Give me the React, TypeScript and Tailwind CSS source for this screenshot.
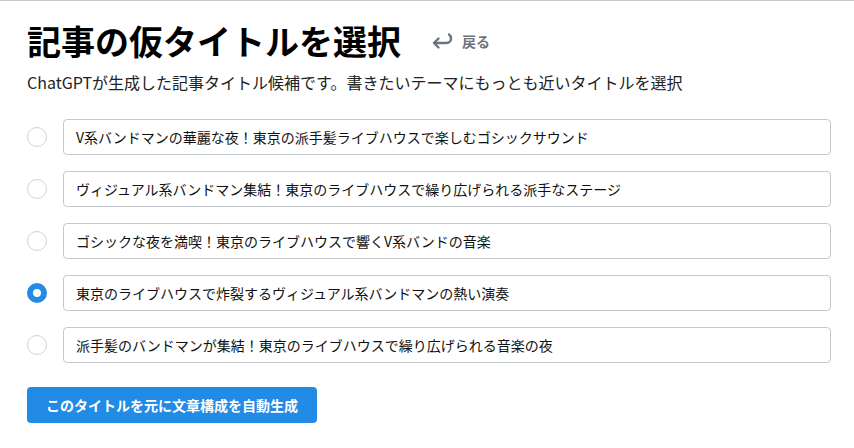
import { useState } from 'react';

const titles = [
  'V系バンドマンの華麗な夜！東京の派手髪ライブハウスで楽しむゴシックサウンド',
  'ヴィジュアル系バンドマン集結！東京のライブハウスで繰り広げられる派手なステージ',
  'ゴシックな夜を満喫！東京のライブハウスで響くV系バンドの音楽',
  '東京のライブハウスで炸裂するヴィジュアル系バンドマンの熱い演奏',
  '派手髪のバンドマンが集結！東京のライブハウスで繰り広げられる音楽の夜',
];

export default function App() {
  const [selected, setSelected] = useState(3);

  return (
    <div
      className="min-h-screen bg-white border-t border-[#c4c7cc] text-[#111]"
      style={{ fontFamily: '"Noto Sans CJK JP", "Noto Sans", sans-serif' }}
    >
      <div className="pl-[27px] pr-[23px] pt-[17px]">
        {/* Header */}
        <div className="flex items-center h-[46px]">
          <h1 className="text-[34px] font-bold leading-none text-black">
            記事の仮タイトルを選択
          </h1>
          <button className="ml-[30px] flex items-center gap-[9px] text-[#6b7280] text-[14px] font-bold">
            <svg width="22" height="18" viewBox="0 0 22 18" fill="none">
              <path
                d="M18 2.5c1.5 1 2 2.5 2 4a4.5 4.5 0 0 1-4.5 4.5H3.5"
                stroke="#6b7280"
                strokeWidth="2.4"
                strokeLinecap="round"
              />
              <path
                d="M7.5 6.5 3 11l4.5 4.5"
                stroke="#6b7280"
                strokeWidth="2.4"
                strokeLinecap="round"
                strokeLinejoin="round"
              />
            </svg>
            戻る
          </button>
        </div>

        <p className="mt-[6px] text-[16px] leading-[24px] text-[#222]">
          ChatGPTが生成した記事タイトル候補です。書きたいテーマにもっとも近いタイトルを選択
        </p>

        {/* Candidate list */}
        <div className="mt-[25px] flex flex-col gap-[16px]">
          {titles.map((t, i) => (
            <label key={i} className="flex items-center gap-[16px] cursor-pointer">
              <input
                type="radio"
                name="title"
                className="sr-only"
                checked={selected === i}
                onChange={() => setSelected(i)}
              />
              <span
                className={
                  selected === i
                    ? 'w-[20px] h-[20px] rounded-full border-[6px] border-[#228be6] bg-white shrink-0'
                    : 'w-[20px] h-[20px] rounded-full border border-[#ced4da] bg-white shrink-0'
                }
              />
              <span className="flex-1 h-[36px] flex items-center px-[12px] border border-[#c4c7cc] rounded-[4px] text-[14px] text-[#111]">
                {t}
              </span>
            </label>
          ))}
        </div>

        <button className="mt-[24px] h-[36px] w-[290px] rounded-[4px] bg-[#228be6] text-white text-[14px] font-bold">
          このタイトルを元に文章構成を自動生成
        </button>
      </div>
    </div>
  );
}
